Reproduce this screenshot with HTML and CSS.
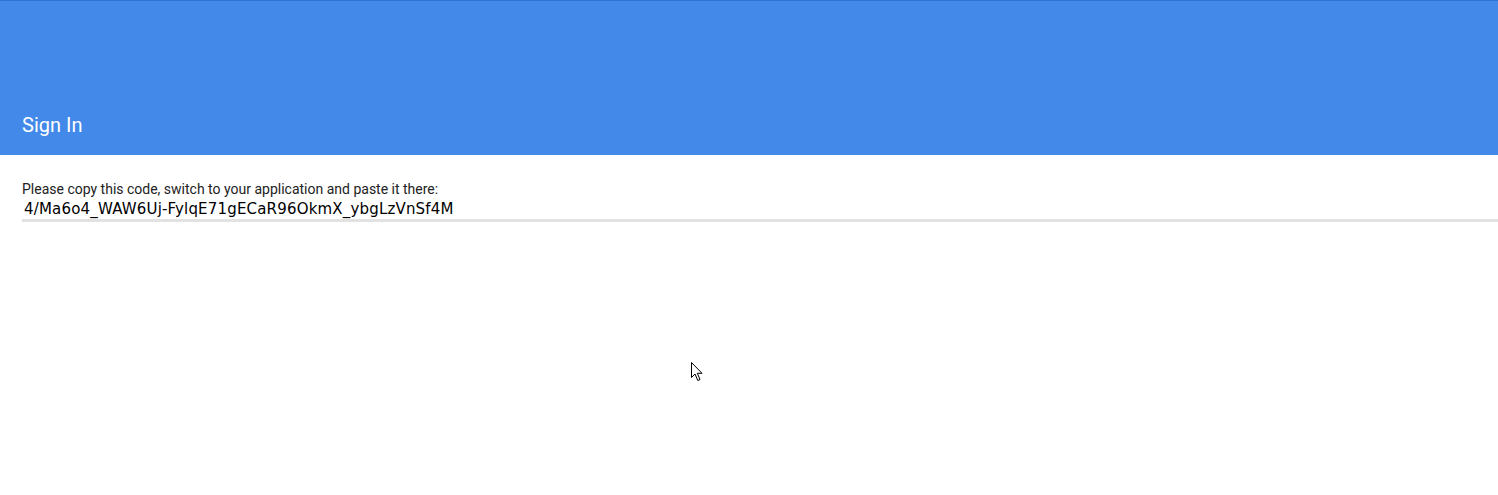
FILE: index.html
```html
<!DOCTYPE html>
<html>
<head>
<meta charset="utf-8">
<link rel="stylesheet" href="styles.css">
</head>
<body>
<header class="appbar">
  <div class="title">Sign In</div>
</header>
<main class="content">
  <div class="label">Please copy this code, switch to your application and paste it there:</div>
  <div class="code">4/Ma6o4_WAW6Uj-FylqE71gECaR96OkmX_ybgLzVnSf4M</div>
</main>
<svg class="cursor" width="14" height="22" viewBox="0 0 14 22">
  <path d="M1.5 1.5 L1.5 16.5 L5 13 L7.8 19.5 L10 18.5 L7.3 12.3 L12 12.3 Z" fill="#fff" stroke="#000" stroke-width="1" stroke-linejoin="miter"/>
</svg>
</body>
</html>
```
FILE: styles.css
```css
html, body {
  margin: 0;
  padding: 0;
  background: #fff;
}
.appbar {
  background: #4289e9;
  border-top: 1px solid #2f73d6;
  display: flex;
  align-items: flex-end;
  padding: 0 22px 18px;
  box-sizing: border-box;
  height: 155px;
}
.title {
  font-family: Roboto, "Liberation Sans", sans-serif;
  font-size: 20px;
  color: #fff;
  line-height: 24px;
}
.content {
  padding: 26px 0 0 22px;
}
.label {
  font-family: Roboto, "Liberation Sans", sans-serif;
  font-size: 14px;
  color: #222;
  line-height: 17px;
}
.code {
  font-family: "DejaVu Sans", sans-serif;
  font-size: 15px;
  letter-spacing: 0.18px;
  color: #000;
  line-height: 19px;
  padding: 2px 0 0 2px;
  border-bottom: 3px solid #e2e2e2;
}
.cursor {
  position: absolute;
  left: 690px;
  top: 361px;
}
```
